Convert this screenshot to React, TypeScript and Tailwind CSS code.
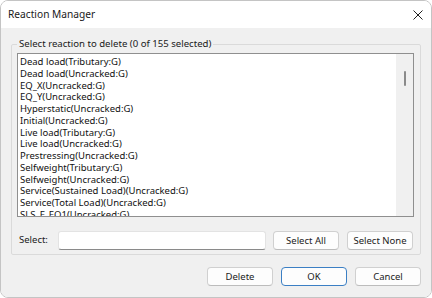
const reactions = [
  "Dead load(Tributary:G)",
  "Dead load(Uncracked:G)",
  "EQ_X(Uncracked:G)",
  "EQ_Y(Uncracked:G)",
  "Hyperstatic(Uncracked:G)",
  "Initial(Uncracked:G)",
  "Live load(Tributary:G)",
  "Live load(Uncracked:G)",
  "Prestressing(Uncracked:G)",
  "Selfweight(Tributary:G)",
  "Selfweight(Uncracked:G)",
  "Service(Sustained Load)(Uncracked:G)",
  "Service(Total Load)(Uncracked:G)",
  "SLS_F_EQ1(Uncracked:G)",
];

function Button({ label, primary }: { label: string; primary?: boolean }) {
  return (
    <button
      className={`w-[66px] h-[19px] rounded-[4px] bg-[#fdfdfd] text-[9.5px] text-[#1b1b1b] leading-none ${
        primary
          ? "border border-[#3b7fc4]"
          : "border border-[#d0d0d0] border-b-[#bcbcbc]"
      }`}
    >
      {label}
    </button>
  );
}

export default function App() {
  return (
    <div className="w-[432px] h-[298px] bg-white font-['Noto_Sans',sans-serif]">
      <div className="w-[432px] h-[298px] flex flex-col rounded-[8px] border border-[#c4c4c4] overflow-hidden">
        {/* Title bar */}
        <div className="h-[27px] shrink-0 bg-white flex items-center justify-between pl-[7px] pr-[8px]">
          <span className="text-[10.2px] text-[#1a1a1a]">Reaction Manager</span>
          <svg width="10" height="10" viewBox="0 0 10 10" className="text-[#1f1f1f]">
            <path d="M0.5 0.5L9.5 9.5M9.5 0.5L0.5 9.5" stroke="currentColor" strokeWidth="1" />
          </svg>
        </div>

        {/* Body */}
        <div className="flex-1 bg-[#f0f0f0] px-[10px] pt-[8px]">
          <fieldset className="border border-[#dadada] rounded-[2px] pl-[5px] pr-[6px] pb-[5px] h-[219px]">
            <legend className="px-[2px] text-[9.6px] leading-[16px] text-[#1a1a1a]">
              Select reaction to delete (0 of 155 selected)
            </legend>

            {/* List box */}
            <div className="mt-[1px] h-[164px] flex bg-white border border-[#8f8f8f] overflow-hidden">
              <ul className="flex-1 pl-[2px] pt-[2px] text-[9.5px] leading-[11.75px] text-[#111]">
                {reactions.map((r) => (
                  <li key={r} className="whitespace-nowrap">
                    {r}
                  </li>
                ))}
              </ul>
              <div className="w-[17px] shrink-0 bg-[#f0f0f0] flex justify-center pt-[17px]">
                <div className="w-[2px] h-[15px] rounded-full bg-[#8a8a8a]" />
              </div>
            </div>

            {/* Select row */}
            <div className="mt-[14px] flex items-center h-[19px]">
              <span className="w-[41px] pl-[2px] text-[9.5px] text-[#1a1a1a]">Select:</span>
              <div className="w-[208px] h-[19px] bg-white border border-[#e3e3e3] border-b-[#8a8a8a] rounded-[3px]" />
              <div className="ml-[7px] flex gap-[8px]">
                <Button label="Select All" />
                <Button label="Select None" />
              </div>
            </div>
          </fieldset>

          {/* Dialog buttons */}
          <div className="mt-[12px] flex justify-end gap-[8px]">
            <Button label="Delete" />
            <Button label="OK" primary />
            <Button label="Cancel" />
          </div>
        </div>
      </div>
    </div>
  );
}
